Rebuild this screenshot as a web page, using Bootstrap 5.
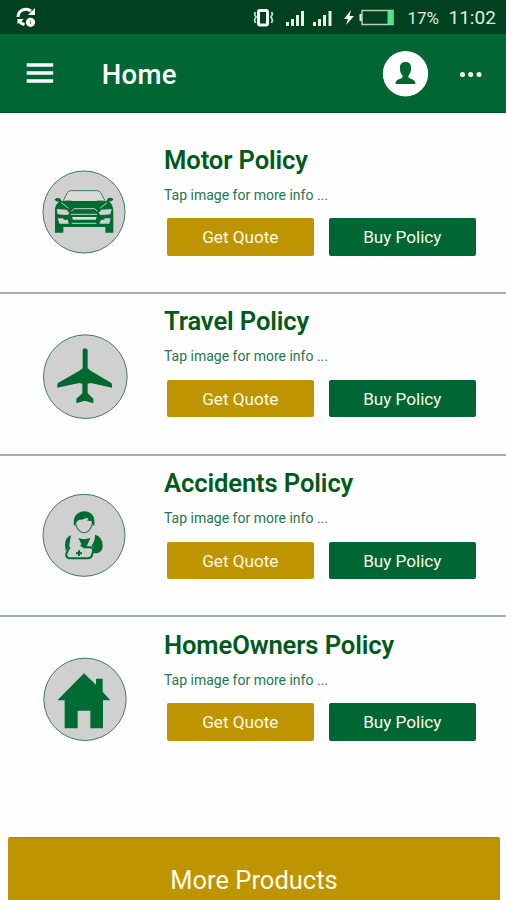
<!DOCTYPE html>
<html lang="en">
<head>
<meta charset="utf-8">
<meta name="viewport" content="width=device-width, initial-scale=1">
<title>Home</title>
<link href="https://cdn.jsdelivr.net/npm/bootstrap@5.3.0/dist/css/bootstrap.min.css" rel="stylesheet">
<style>
:root { --brand: #006633; --gold: #be9500; }
body { font-family: Roboto, sans-serif; height: 900px; overflow: hidden; background: #fefefe; }
.statusbar { height: 34px; background: #00411f; color: #dfeee0; }
.statusbar svg, .appbar svg, .policy svg { display: block; flex: none; }
.battery-text { font-size: 17px; line-height: 36px; width: 41px; margin-left: 12.5px; }
.clock { font-size: 19px; line-height: 36px; width: 56px; }
.appbar { height: 79px; background: var(--brand); border-bottom: 1px solid #00501f; }
.appbar h1 { font-size: 27.5px; font-weight: 500; line-height: 32px; letter-spacing: .3px; margin: 4px 0 0 46.7px; }
.policies { padding-top: 19px; height: 724px; }
.policy { height: 161.8px; border-bottom: 2px solid #a2b3ad; padding-left: 30px; }
.policy:last-child { border-bottom: 0; }
.policy > svg { margin-top: 28px; }
.policy-body { margin-left: 24px; padding-top: 10.5px; }
.policy h2 { font-size: 25.6px; line-height: 34px; font-weight: 600; letter-spacing: -.12px; color: #005b1b; margin: 0; white-space: nowrap; }
.policy p { font-size: 14px; line-height: 18px; color: #24774e; margin: 9px 0 14.5px; white-space: nowrap; }
.policy .btn { width: 147.5px; height: 37.5px; padding: 1px 0 0; font-size: 17.2px; line-height: 37px; letter-spacing: -.05px; border: 0; border-radius: 2px; color: #fffbe8; }
.policy .btns { gap: 14.5px; margin-left: 2.5px; }
.btn-gold, .btn-gold:hover { background: var(--gold); }
.btn-brand, .btn-brand:hover { background: var(--brand); }
.more { margin: 0 6px 0 8px; height: 84px; font-size: 25.5px; line-height: 84px; padding: 0; border: 0; border-radius: 2px; color: #fffbe8; border-top: 1px solid #a98808; }
</style>
</head>
<body>
<div class="statusbar d-flex">
  <svg width="240" height="34" viewBox="0 0 240 34" fill="none" stroke="#fff">
    <path d="M18 17a8 8 0 0 1 13-6" stroke-width="3"/><path d="M35 8v7h-7z" fill="#fff" stroke="none"/>
    <path d="M17.500 19h6l-2 2.500 3.500 2-1 2.500q-4-1-5-3l-1.500 1z" fill="#fff" stroke="none"/>
    <circle cx="30.500" cy="22.300" r="4.600" fill="#fff" stroke="none"/><path d="M30.500 20.500v3.500" stroke="#5f8a70"/>
  </svg>
  <svg width="155" height="34" viewBox="240 0 155 34" fill="#e6efe6">
    <rect x="258.500" y="10.500" width="9" height="14.500" rx="1.500" fill="none" stroke="#fff" stroke-width="3"/>
    <path d="M255.500 12l-1 2 1.500 3-1.500 3 1 3M271.500 12l1 2-1.500 3 1.500 3-1 3" fill="none" stroke="#c7dcca" stroke-width="1.700"/>
    <path d="M286 22h3v4h-3zM291 19h3v7h-3zM296 15h3v11h-3zM301 11h3v15h-3zM313 22h3v4h-3zM318 19h3v7h-3zM323 15h3v11h-3zM328.500 11h3v15h-3z"/>
    <path d="M351 10l-7 9h4l-2 6 8-9h-4.500z" fill="#fff"/>
    <rect x="362" y="10.500" width="31" height="14" fill="none" stroke="#bdcbbb" stroke-width="1.500"/><path d="M359.500 14h2v7h-2z"/>
    <path d="M387.500 10.500h5v14h-5z" fill="#48e986"/>
  </svg>
  <span class="battery-text">17%</span><span class="clock">11:02</span>
</div>
<header class="appbar d-flex text-white">
  <svg width="55" height="78" viewBox="0 34 55 78" fill="#fff"><path d="M26.700 63.300h26.500v3.500H26.700zM26.700 71.300h26.500v3.500H26.700zM26.700 79.300h26.500v3.500H26.700z"/></svg>
  <h1 class="align-self-center">Home</h1>
  <svg class="ms-auto" width="126" height="78" viewBox="380 34 126 78" fill="#fff">
    <circle cx="405.500" cy="73.700" r="22.700"/>
    <path d="M405.500 62c4 0 6 2.500 5.500 7 0 3-1 5-2.500 6.500v2c3 2 7 2 7 6.500h-20c0-4.500 4-4.500 7-6.500v-2c-1.500-1.500-2.500-3.500-2.500-6.500-.5-4.500 1.500-7 5.500-7z" fill="#006633"/>
    <circle cx="462.500" cy="74.500" r="2.500"/><circle cx="470.700" cy="74.500" r="2.500"/><circle cx="479" cy="74.500" r="2.500"/>
  </svg>
</header>
<main class="policies">
  <section class="policy d-flex">
    <svg width="110" height="105" viewBox="0 0 330 315">
      <circle cx="162" cy="156" r="123" fill="#d0d0d0" stroke="#3d7d5b" stroke-width="3"/>
      <path d="M100 122l12-24q3-6 12-6h76q9 0 12 6l13 24" fill="#dadada" stroke="#3d7d5b" stroke-width="3"/>
      <path d="M74 118q8-7 17-2l4 8q15-4 36-1h64q20-3 34 1l5-9q10-4 16 3-2 7-14 6 14 10 14 30v64h-24v-17H100v17H75v-62q-2-22 13-31-12 1-14-7z" fill="#006b33"/>
      <path d="M80 147l30 2 8 10-6 7-29-3zM245 147l-31 2-8 10 6 7 29-3zM83 175h28l6 16H88zM242 175h-27l-7 16h30z" fill="#d0d0d0"/>
      <path d="M124 154l8-8h62l8 8M122 163h79M125 190h74M94 128l22 17M231 128l-21 17" fill="none" stroke="#c3d3c6" stroke-width="3"/>
      <path d="M126 171h74l-3 8h-68z" fill="#dcdcdc"/>
      <circle cx="107" cy="172" r="8" fill="#006b33"/><circle cx="217" cy="172" r="8" fill="#006b33"/>
    </svg>
    <div class="policy-body"><h2>Motor Policy</h2><p>Tap image for more info ...</p>
      <div class="btns d-flex"><button class="btn btn-gold">Get Quote</button><button class="btn btn-brand">Buy Policy</button></div></div>
  </section>
  <section class="policy d-flex">
    <svg width="110" height="105" viewBox="0 -1 330 315">
      <circle cx="166" cy="163" r="125.500" fill="#d0d0d0" stroke="#3d7d5b" stroke-width="3"/>
      <path d="M158 83q0-5 7-5t8 5v55l9 7 62 37q3 3 2 14l-63-14-10 2v29l17 16v14l-22-7h-6l-23 7v-14l18-16v-29l-10-2-65 14q-1-11 2-14l64-37 10-7z" fill="#00692f"/>
    </svg>
    <div class="policy-body"><h2>Travel Policy</h2><p>Tap image for more info ...</p>
      <div class="btns d-flex"><button class="btn btn-gold">Get Quote</button><button class="btn btn-brand">Buy Policy</button></div></div>
  </section>
  <section class="policy d-flex">
    <svg width="110" height="105" viewBox="0 -3 330 315">
      <circle cx="162" cy="151" r="123" fill="#d0d0d0" stroke="#3d7d5b" stroke-width="3"/>
      <path d="M136 103q-1 18 8 29 7 11 18 11t18-11q9-11 8-29" fill="none" stroke="#3d7d5b" stroke-width="4"/>
      <path d="M132 122q-5-39 29-43 37 1 32 43l-5-3-4-12q-5 3-13-1l-3-8q-8 8-21 6-10 6-11 15z" fill="#006b33"/>
      <circle cx="172" cy="102" r="3" fill="#d0d0d0"/>
      <path d="M145 159q16 7 36 0l-12 28-12-4z" fill="#006b33"/>
      <path d="M123 151q-17 5-18 28l2 19 10-12zM195 149q22 4 23 34-1 18-16 22l-12-1 2-14-8-9q11-10 11-32z" fill="#006b33"/>
      <path d="M119 185l-9 19q-5 12 7 16h58q9-1 11-9l4-15q-1-10-13-9h-14l-11-7" fill="none" stroke="#006b33" stroke-width="6" stroke-linejoin="round"/>
      <path d="M147 196v17M138 204.500h18" stroke="#006b33" stroke-width="6"/>
    </svg>
    <div class="policy-body"><h2>Accidents Policy</h2><p>Tap image for more info ...</p>
      <div class="btns d-flex"><button class="btn btn-gold">Get Quote</button><button class="btn btn-brand">Buy Policy</button></div></div>
  </section>
  <section class="policy d-flex">
    <svg width="110" height="105" viewBox="0 -6 330 315">
      <circle cx="165" cy="157" r="123.500" fill="#d0d0d0" stroke="#3d7d5b" stroke-width="3"/>
      <path d="M162 79l36 34V95h20v39l23 26h-22v84h-38v-53h-38v53h-39v-84H82z" fill="#006b33"/>
    </svg>
    <div class="policy-body"><h2>HomeOwners Policy</h2><p>Tap image for more info ...</p>
      <div class="btns d-flex"><button class="btn btn-gold">Get Quote</button><button class="btn btn-brand">Buy Policy</button></div></div>
  </section>
</main>
<div class="d-grid"><button class="btn btn-gold more">More Products</button></div>
<script src="https://cdn.jsdelivr.net/npm/bootstrap@5.3.0/dist/js/bootstrap.bundle.min.js"></script>
</body>
</html>
